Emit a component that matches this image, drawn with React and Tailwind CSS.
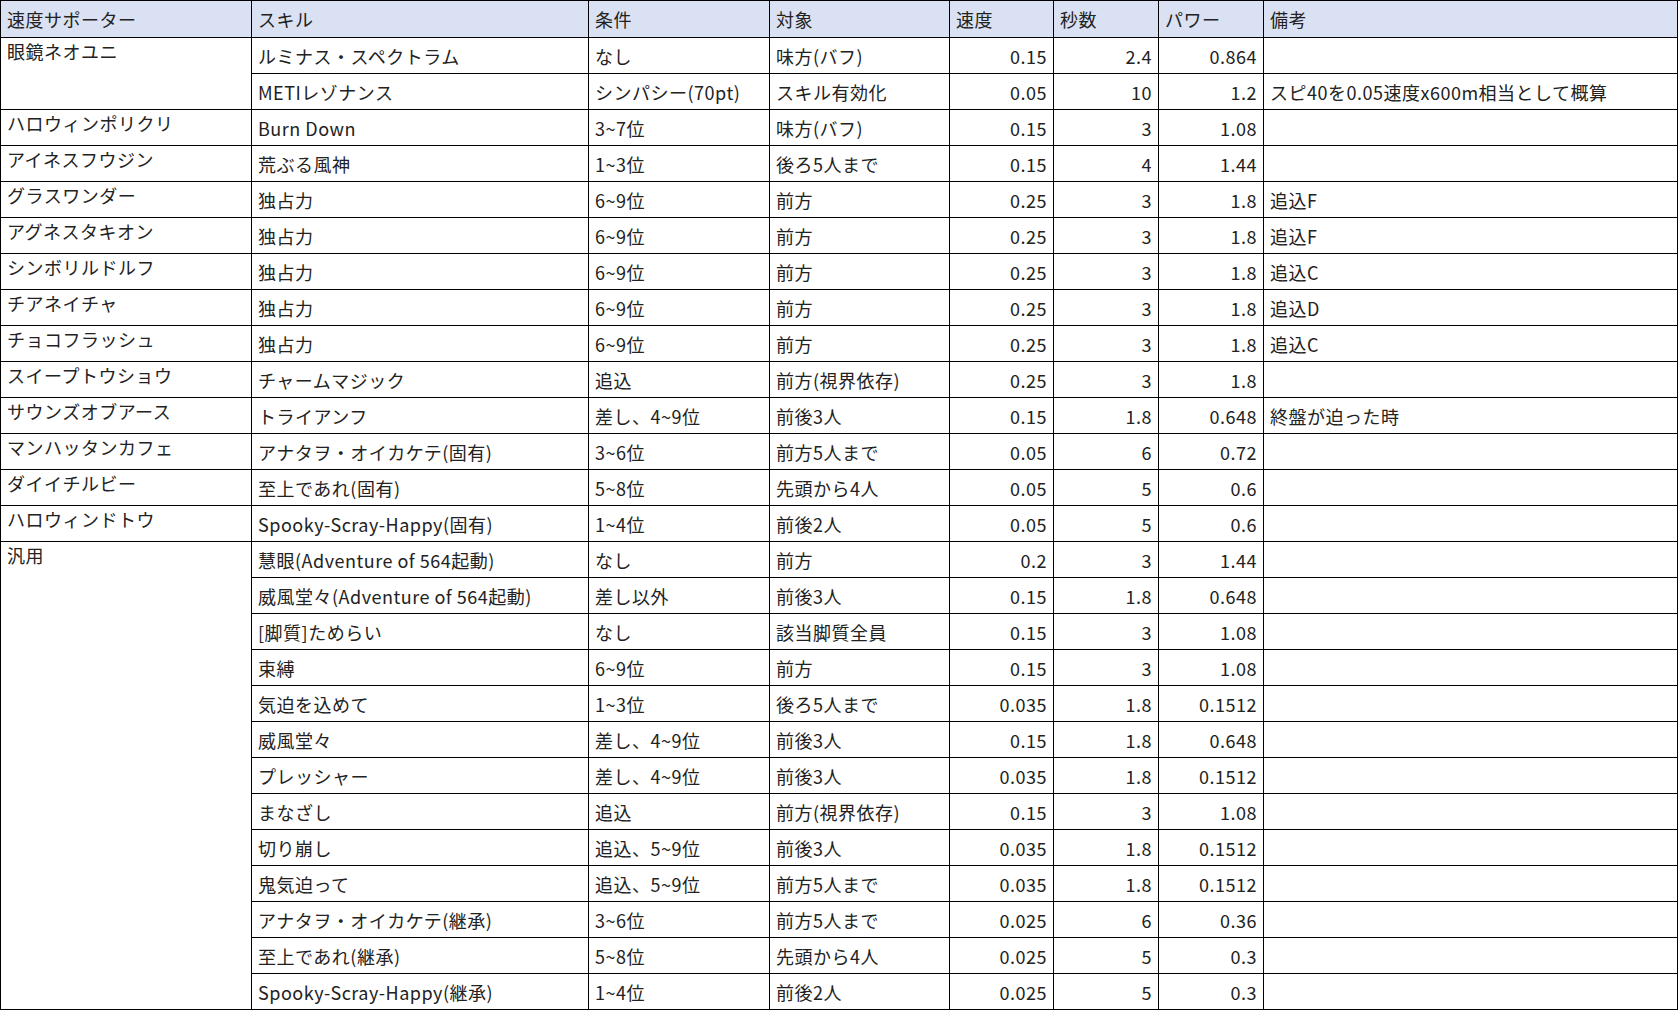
const H=["速度サポーター","スキル","条件","対象","速度","秒数","パワー","備考"];
const rows=[
["眼鏡ネオユニ","ルミナス・スペクトラム","なし","味方(バフ)","0.15","2.4","0.864",""],
[null,"METIレゾナンス","シンパシー(70pt)","スキル有効化","0.05","10","1.2","スピ40を0.05速度x600m相当として概算"],
["ハロウィンポリクリ","Burn Down","3~7位","味方(バフ)","0.15","3","1.08",""],
["アイネスフウジン","荒ぶる風神","1~3位","後ろ5人まで","0.15","4","1.44",""],
["グラスワンダー","独占力","6~9位","前方","0.25","3","1.8","追込F"],
["アグネスタキオン","独占力","6~9位","前方","0.25","3","1.8","追込F"],
["シンボリルドルフ","独占力","6~9位","前方","0.25","3","1.8","追込C"],
["チアネイチャ","独占力","6~9位","前方","0.25","3","1.8","追込D"],
["チョコフラッシュ","独占力","6~9位","前方","0.25","3","1.8","追込C"],
["スイープトウショウ","チャームマジック","追込","前方(視界依存)","0.25","3","1.8",""],
["サウンズオブアース","トライアンフ","差し、4~9位","前後3人","0.15","1.8","0.648","終盤が迫った時"],
["マンハッタンカフェ","アナタヲ・オイカケテ(固有)","3~6位","前方5人まで","0.05","6","0.72",""],
["ダイイチルビー","至上であれ(固有)","5~8位","先頭から4人","0.05","5","0.6",""],
["ハロウィンドトウ","Spooky-Scray-Happy(固有)","1~4位","前後2人","0.05","5","0.6",""],
["汎用","慧眼(Adventure of 564起動)","なし","前方","0.2","3","1.44",""],
[null,"威風堂々(Adventure of 564起動)","差し以外","前後3人","0.15","1.8","0.648",""],
[null,"[脚質]ためらい","なし","該当脚質全員","0.15","3","1.08",""],
[null,"束縛","6~9位","前方","0.15","3","1.08",""],
[null,"気迫を込めて","1~3位","後ろ5人まで","0.035","1.8","0.1512",""],
[null,"威風堂々","差し、4~9位","前後3人","0.15","1.8","0.648",""],
[null,"プレッシャー","差し、4~9位","前後3人","0.035","1.8","0.1512",""],
[null,"まなざし","追込","前方(視界依存)","0.15","3","1.08",""],
[null,"切り崩し","追込、5~9位","前後3人","0.035","1.8","0.1512",""],
[null,"鬼気迫って","追込、5~9位","前方5人まで","0.035","1.8","0.1512",""],
[null,"アナタヲ・オイカケテ(継承)","3~6位","前方5人まで","0.025","6","0.36",""],
[null,"至上であれ(継承)","5~8位","先頭から4人","0.025","5","0.3",""],
[null,"Spooky-Scray-Happy(継承)","1~4位","前後2人","0.025","5","0.3",""],
];
const span={0:"row-span-2",14:"row-span-13"};
export default function App(){
 const cells=[];
 H.forEach((h,i)=>cells.push(<div key={"h"+i} className="bg-[#d9e1f2] border-r border-b border-black px-[6px] flex items-center">{h}</div>));
 rows.forEach((r,ri)=>r.forEach((c,ci)=>{
  if(c===null)return;
  const num=ci>=4&&ci<=6;
  cells.push(<div key={ri+"-"+ci} className={`border-r border-b border-black px-[6px] flex ${ci===0?"items-start pt-[4px]":"items-center"} ${num?"justify-end":""} ${ci===0?(span[ri]||""):""} whitespace-nowrap overflow-hidden`}>{c}</div>);
 }));
 return <div className="w-[1680px] h-[1011px] bg-white overflow-hidden" style={{fontFamily:'"Noto Sans CJK JP","Noto Sans",sans-serif'}}>
  <div className="grid grid-cols-[251px_337px_181px_180px_104px_105px_105px_414px] grid-rows-[37px_repeat(27,36px)] border-l border-t border-black text-[18px] leading-none text-[#222] tracking-[0.5px]">{cells}</div>
 </div>;
}
